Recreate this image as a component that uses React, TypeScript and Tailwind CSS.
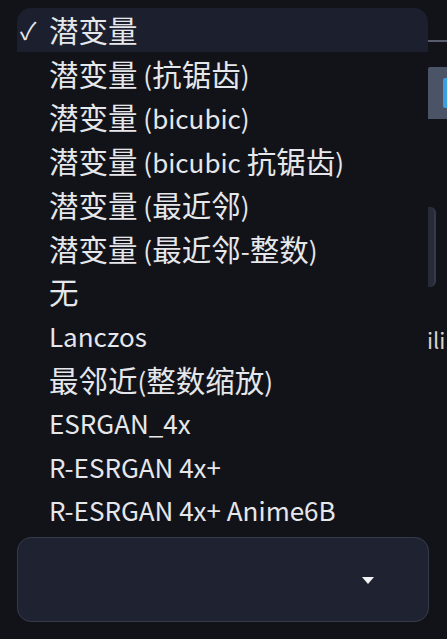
import React from 'react';

const options = [
  '潜变量',
  '潜变量 (抗锯齿)',
  '潜变量 (bicubic)',
  '潜变量 (bicubic 抗锯齿)',
  '潜变量 (最近邻)',
  '潜变量 (最近邻-整数)',
  '无',
  'Lanczos',
  '最邻近(整数缩放)',
  'ESRGAN_4x',
  'R-ESRGAN 4x+',
  'R-ESRGAN 4x+ Anime6B',
];

// CJK glyphs in the shot are a bit wider than the latin ones, so split runs
const Label = ({ text }: { text: string }) => {
  const parts = text.match(/[\u4e00-\u9fff]+|[^\u4e00-\u9fff]+/g) || [];
  return (
    <span className="whitespace-pre">
      {parts.map((p, i) =>
        /[\u4e00-\u9fff]/.test(p) ? (
          <span key={i} className="text-[29.5px]">{p}</span>
        ) : (
          <span key={i}>{p}</span>
        )
      )}
    </span>
  );
};

export default function App() {
  return (
    <div
      className="relative w-[447px] h-[639px] overflow-hidden bg-[#121319] text-[#e5e7eb] flex flex-col"
      style={{ fontFamily: '"Noto Sans CJK SC", "Noto Sans", sans-serif' }}
    >
      {/* page content peeking out behind the menu */}
      <div className="flex h-[537px] shrink-0">
        <div className="w-[17px]" />
        <div className="w-[2px] flex flex-col">
          <div className="mt-[40px] h-[135px] bg-[#2a2d39]" />
          <div className="mt-[7px] h-[2px] bg-[#8a93a8]" />
          <div className="mt-[6px] h-[2px] bg-[#8a93a8]" />
          <div className="mt-[21px] h-[67px] bg-[#2e313e]" />
          <div className="mt-[47px] h-[26px] bg-[#2e313e]" />
          <div className="mt-[70px] h-[25px] bg-[#3e4f9f]" />
          <div className="mt-[53px] h-[2px] bg-[#8a93a8]" />
          <div className="mt-[20px] h-[3px] w-[3px] bg-[#8a93a8]" />
        </div>
        <div className="flex-1" />
        <div className="w-[19px] flex flex-col">
          <div className="mt-[40px] h-[2px] bg-[#575d6c]" />
          <div className="mt-[25px] h-[52px] bg-[#4b5366] rounded-tl-[2px] flex justify-end items-center">
            <div className="w-[4px] h-[30px] bg-[#3b9ede] rounded-l-[2px]" />
          </div>
          <div className="mt-[88px] h-[80px] w-[8px] bg-[#272b38] rounded-r-[6px] border-r-2 border-[#343a4a]" />
          <div className="mt-[41px] text-[22px] leading-none text-[#d9d2c8] -ml-[1px]">ili</div>
        </div>
      </div>

      {/* empty select */}
      <div className="mx-[17px] mr-[18px] h-[85px] rounded-[14px] border border-[#363b4b] bg-[#1f2231] flex items-center justify-end pr-[53px]">
        <svg width="14" height="9" viewBox="0 0 14 9" className="mt-[1px]">
          <path d="M1 1 L13 1 L7 8 Z" fill="#f3f4f6" />
        </svg>
      </div>

      {/* open option list */}
      <ul className="absolute left-[17px] top-[8px] w-[411px] bg-[#121319] rounded-t-[14px]">
        {options.map((o, i) => (
          <li
            key={o}
            className={`relative h-[43.7px] flex items-center pl-[32px] text-[26px] leading-none whitespace-nowrap ${
              i === 0 ? 'bg-[#1c1f2d] rounded-t-[14px]' : ''
            }`}
          >
            {i === 0 && <span className="absolute left-[3px] text-[24px]">✓</span>}
            <Label text={o} />
          </li>
        ))}
      </ul>
    </div>
  );
}
